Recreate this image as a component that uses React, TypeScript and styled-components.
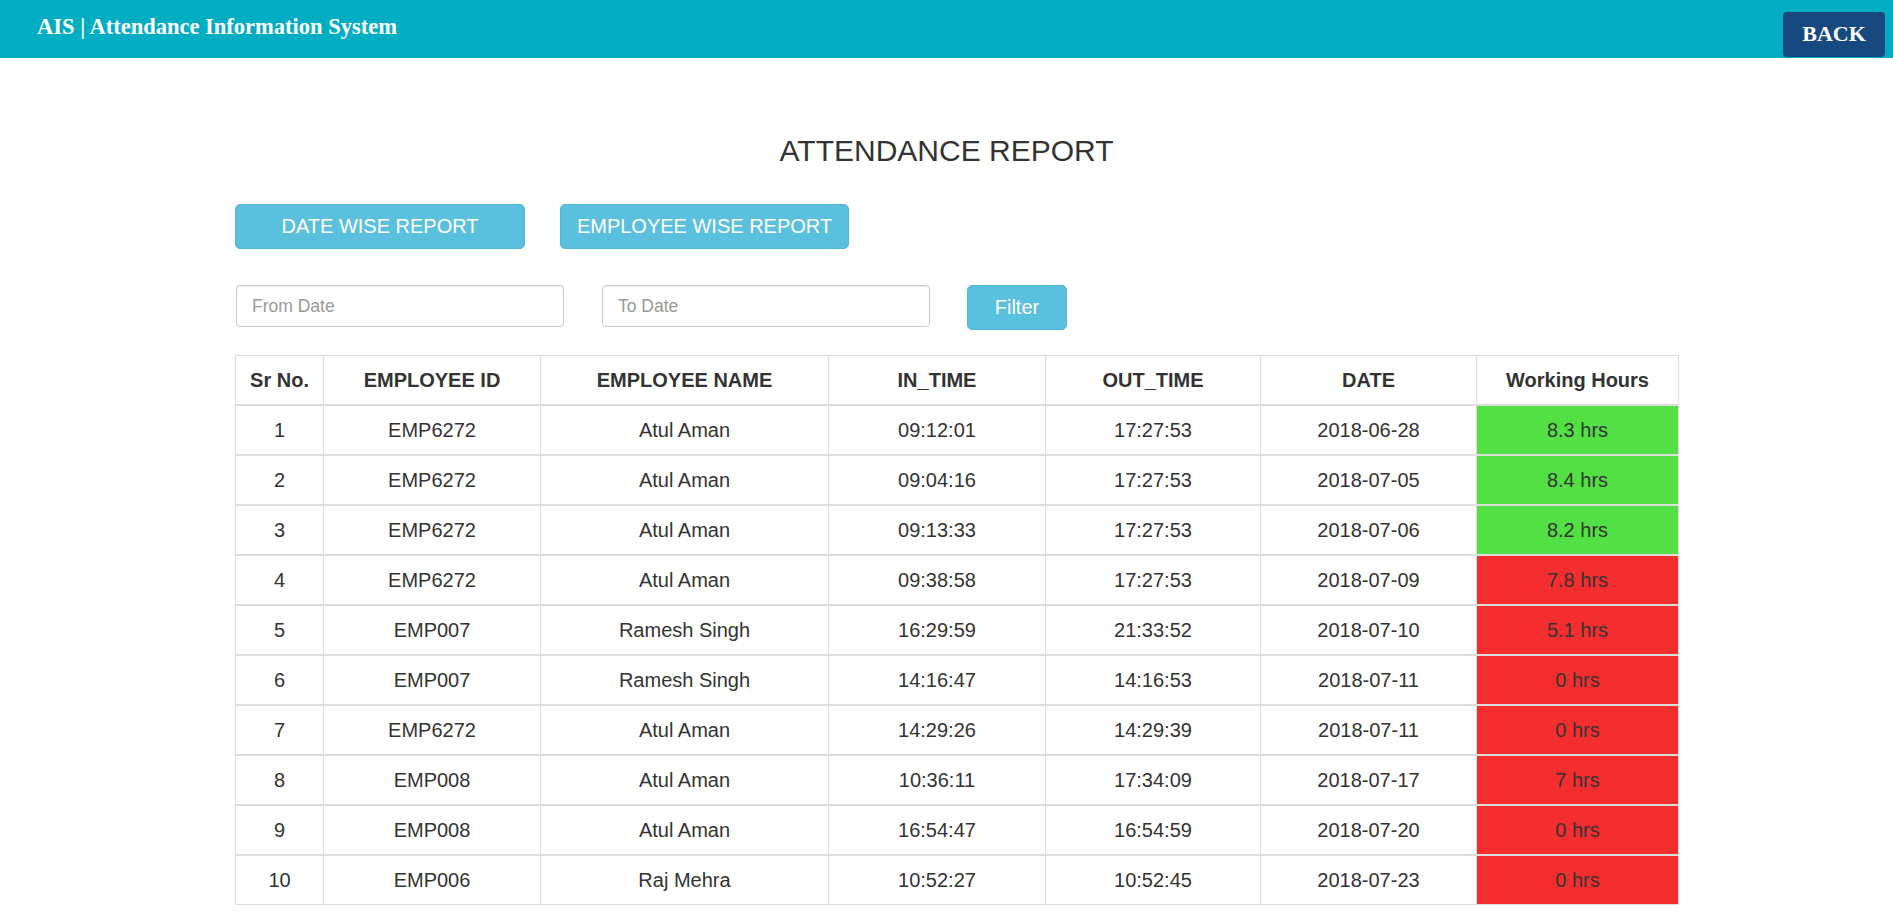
import React from "react";
import styled, { createGlobalStyle } from "styled-components";

const GlobalStyle = createGlobalStyle`
  html, body {
    margin: 0;
    padding: 0;
    background: #ffffff;
    font-family: "Liberation Sans", Arial, Helvetica, sans-serif;
    color: #333333;
  }
  * { box-sizing: border-box; }
`;

const TopBar = styled.header`
  height: 58px;
  background: #01adc3;
  display: flex;
  justify-content: space-between;
  align-items: flex-start;
  padding: 0 8px 0 37px;
`;

const Brand = styled.div`
  margin-top: 14px;
  font-family: "Liberation Serif", "Times New Roman", serif;
  font-weight: bold;
  font-size: 22.5px;
  line-height: 25px;
  color: #ffffff;
`;

const BackButton = styled.button`
  margin-top: 12px;
  width: 102px;
  height: 45px;
  border: none;
  border-radius: 4px;
  background: #17497e;
  color: #ffffff;
  font-family: "Liberation Serif", "Times New Roman", serif;
  font-weight: bold;
  font-size: 22px;
  padding: 0 0 2px;
  cursor: pointer;
`;

const Main = styled.main`
  padding-top: 76px;
`;

const Heading = styled.h2`
  margin: 0;
  text-align: center;
  font-size: 30px;
  line-height: 33px;
  font-weight: normal;
  color: #333333;
`;

const Content = styled.div`
  margin-left: 235px;
  width: 1443px;
`;

const ButtonRow = styled.div`
  display: flex;
  gap: 35px;
  margin-top: 37px;
`;

const InfoButton = styled.button<{ $w: number }>`
  width: ${(p) => p.$w}px;
  height: 45px;
  background: #5bc0de;
  border: 1px solid #4fb9da;
  border-radius: 5px;
  color: #ffffff;
  font-family: "Liberation Sans", Arial, sans-serif;
  font-size: 20px;
  padding: 0;
  cursor: pointer;
`;

const FilterRow = styled.div`
  display: flex;
  align-items: flex-start;
  margin-top: 36px;
  padding-left: 1px;
`;

const DateInput = styled.input`
  width: 328px;
  height: 42px;
  margin-right: 38px;
  border: 1px solid #cccccc;
  border-radius: 4px;
  padding: 0 15px;
  font-family: "Liberation Sans", Arial, sans-serif;
  font-size: 17.5px;
  color: #555555;
  box-shadow: inset 0 1px 1px rgba(0, 0, 0, 0.075);
  outline: none;
  &::placeholder {
    color: #999999;
  }
`;

const FilterButton = styled.button`
  width: 100px;
  height: 45px;
  margin-left: -1px;
  background: #5bc0de;
  border: 1px solid #4fb9da;
  border-radius: 5px;
  color: #ffffff;
  font-family: "Liberation Sans", Arial, sans-serif;
  font-size: 20px;
  padding: 0;
  cursor: pointer;
`;

const Table = styled.table`
  margin-top: 25px;
  width: 1443px;
  table-layout: fixed;
  border-collapse: collapse;
  font-size: 20px;
  color: #333333;
`;

const Col = styled.col<{ $w: number }>`
  width: ${(p) => p.$w}px;
`;

const Th = styled.th`
  border: 1px solid #dddddd;
  border-bottom: 2px solid #dddddd;
  padding: 10px 8px;
  line-height: 28px;
  font-weight: bold;
  text-align: center;
`;

const Td = styled.td<{ $status?: "good" | "bad" }>`
  border-left: 1px solid #dddddd;
  border-right: 1px solid #dddddd;
  border-top: 2px solid #dddddd;
  border-bottom: 1px solid #dddddd;
  padding: 10px 8px;
  line-height: 28px;
  text-align: center;
  background: ${(p) =>
    p.$status === "good" ? "#53e045" : p.$status === "bad" ? "#f42e2e" : "transparent"};
`;

type Row = {
  id: string;
  name: string;
  inTime: string;
  outTime: string;
  date: string;
  hours: string;
  good: boolean;
};

const rows: Row[] = [
  { id: "EMP6272", name: "Atul Aman", inTime: "09:12:01", outTime: "17:27:53", date: "2018-06-28", hours: "8.3 hrs", good: true },
  { id: "EMP6272", name: "Atul Aman", inTime: "09:04:16", outTime: "17:27:53", date: "2018-07-05", hours: "8.4 hrs", good: true },
  { id: "EMP6272", name: "Atul Aman", inTime: "09:13:33", outTime: "17:27:53", date: "2018-07-06", hours: "8.2 hrs", good: true },
  { id: "EMP6272", name: "Atul Aman", inTime: "09:38:58", outTime: "17:27:53", date: "2018-07-09", hours: "7.8 hrs", good: false },
  { id: "EMP007", name: "Ramesh Singh", inTime: "16:29:59", outTime: "21:33:52", date: "2018-07-10", hours: "5.1 hrs", good: false },
  { id: "EMP007", name: "Ramesh Singh", inTime: "14:16:47", outTime: "14:16:53", date: "2018-07-11", hours: "0 hrs", good: false },
  { id: "EMP6272", name: "Atul Aman", inTime: "14:29:26", outTime: "14:29:39", date: "2018-07-11", hours: "0 hrs", good: false },
  { id: "EMP008", name: "Atul Aman", inTime: "10:36:11", outTime: "17:34:09", date: "2018-07-17", hours: "7 hrs", good: false },
  { id: "EMP008", name: "Atul Aman", inTime: "16:54:47", outTime: "16:54:59", date: "2018-07-20", hours: "0 hrs", good: false },
  { id: "EMP006", name: "Raj Mehra", inTime: "10:52:27", outTime: "10:52:45", date: "2018-07-23", hours: "0 hrs", good: false },
];

const colWidths = [88, 217, 288, 217, 215, 216, 202];
const headers = ["Sr No.", "EMPLOYEE ID", "EMPLOYEE NAME", "IN_TIME", "OUT_TIME", "DATE", "Working Hours"];

export default function App() {
  return (
    <>
      <GlobalStyle />
      <TopBar>
        <Brand>AIS | Attendance Information System</Brand>
        <BackButton>BACK</BackButton>
      </TopBar>
      <Main>
        <Heading>ATTENDANCE REPORT</Heading>
        <Content>
          <ButtonRow>
            <InfoButton $w={290}>DATE WISE REPORT</InfoButton>
            <InfoButton $w={289}>EMPLOYEE WISE REPORT</InfoButton>
          </ButtonRow>
          <FilterRow>
            <DateInput placeholder="From Date" />
            <DateInput placeholder="To Date" />
            <FilterButton>Filter</FilterButton>
          </FilterRow>
          <Table>
            <colgroup>
              {colWidths.map((w, i) => (
                <Col key={i} $w={w} />
              ))}
            </colgroup>
            <thead>
              <tr>
                {headers.map((h) => (
                  <Th key={h}>{h}</Th>
                ))}
              </tr>
            </thead>
            <tbody>
              {rows.map((r, i) => (
                <tr key={i}>
                  <Td>{i + 1}</Td>
                  <Td>{r.id}</Td>
                  <Td>{r.name}</Td>
                  <Td>{r.inTime}</Td>
                  <Td>{r.outTime}</Td>
                  <Td>{r.date}</Td>
                  <Td $status={r.good ? "good" : "bad"}>{r.hours}</Td>
                </tr>
              ))}
            </tbody>
          </Table>
        </Content>
      </Main>
    </>
  );
}
